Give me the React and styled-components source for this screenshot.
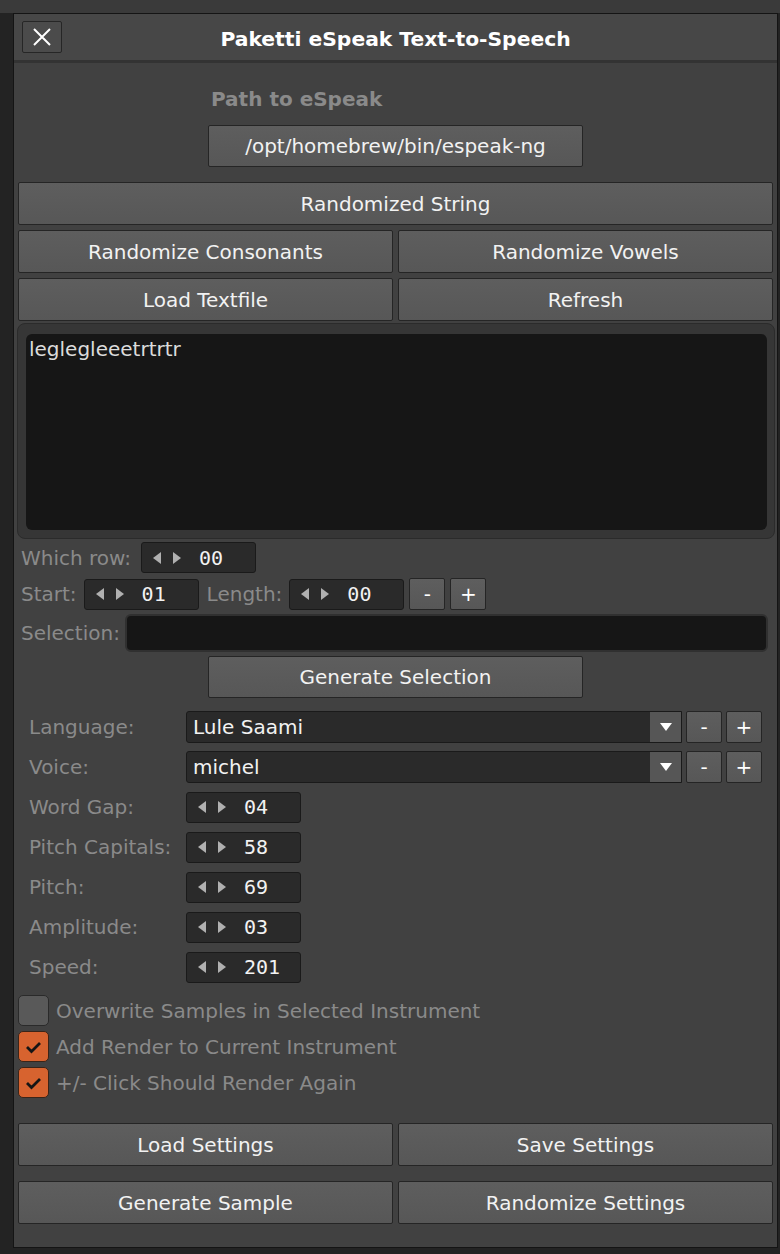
import React from 'react'
import styled, { createGlobalStyle } from 'styled-components'

const GlobalStyle = createGlobalStyle`
  html, body {
    margin: 0;
    padding: 0;
  }
  body {
    background: linear-gradient(#3a3a3a 0, #3a3a3a 13px, #232323 13px);
    font-family: "DejaVu Sans", "Liberation Sans", sans-serif;
    font-size: 20px;
  }
`

const Desk = styled.div`
  padding: 13px 2px 0 13px;
  height: 1254px;
  box-sizing: border-box;
`

const Window = styled.div`
  width: 765px;
  box-sizing: border-box;
  background: #414141;
  border: 1px solid #141414;
`

const TitleBar = styled.div`
  height: 46px;
  display: grid;
  grid-template-columns: 40px 1fr 40px;
  align-items: center;
  padding: 0 8px;
  background: #474747;
  border-bottom: 3px solid #333;
`

const CloseButton = styled.div`
  width: 40px;
  height: 32px;
  box-sizing: border-box;
  display: flex;
  align-items: center;
  justify-content: center;
  background: #4b4b4b;
  border: 1px solid #262626;
  border-radius: 2px;
`

const Title = styled.div`
  text-align: center;
  color: #fff;
  font-weight: bold;
  font-size: 20.3px;
  padding-top: 3px;
`

const Content = styled.div`
  padding: 0 4px 23px;
`

const PathLabel = styled.div`
  margin: 24px 0 14px 193px;
  line-height: 24px;
  font-weight: bold;
  color: #8a8a8a;
`

const Button = styled.div`
  height: ${p => p.h || 43}px;
  box-sizing: border-box;
  display: flex;
  align-items: center;
  justify-content: center;
  background: linear-gradient(#5e5e5e, #575757);
  border: 1px solid #252525;
  border-radius: 2px;
  color: #f2f2f2;
  white-space: nowrap;
  ${p => p.narrow && 'width: 375px; margin-left: 190px;'}
  margin-top: ${p => p.mt || 0}px;
`

const ButtonRow = styled.div`
  display: grid;
  grid-template-columns: 1fr 1fr;
  gap: 5px;
  margin-top: ${p => p.mt || 5}px;
`

const TextFrame = styled.div`
  margin: 2px -2px 0 -1px;
  height: 216px;
  box-sizing: border-box;
  padding: 10px 7px 8px 8px;
  background: #363636;
  border: 1px solid #2b2b2b;
  border-radius: 8px;
`

const TextArea = styled.div`
  height: 100%;
  box-sizing: border-box;
  padding: 3px 3px;
  line-height: 24px;
  background: #161616;
  border-radius: 6px;
  color: #dcdcdc;
`

const FieldRow = styled.div`
  display: flex;
  align-items: center;
  gap: ${p => p.gap || 7}px;
  margin-top: ${p => p.mt || 0}px;
  padding-left: 3px;
`

const Label = styled.span`
  color: #8a8a8a;
  white-space: nowrap;
`

const ValueBox = styled.div`
  width: 115px;
  height: 31px;
  box-sizing: border-box;
  display: flex;
  align-items: center;
  padding-left: 10px;
  background: #2a2a2a;
  border: 1px solid #1a1a1a;
  border-radius: 3px;
`

const Arrows = styled.svg`
  flex: none;
  margin-right: 17px;
`

const Number = styled.span`
  font-family: "DejaVu Sans Mono", "Liberation Mono", monospace;
  color: #f2f2f2;
`

const SmallButton = styled.div`
  width: 36px;
  height: 32px;
  box-sizing: border-box;
  display: flex;
  align-items: center;
  justify-content: center;
  background: linear-gradient(#5e5e5e, #575757);
  border: 1px solid #252525;
  border-radius: 2px;
  color: #fff;
  margin-left: ${p => p.ml || 0}px;
`

const SelectionField = styled.div`
  flex: 1;
  height: 38px;
  margin-right: 5px;
  box-sizing: border-box;
  background: #161616;
  border: 2px solid #303030;
  border-radius: 6px;
`

const Settings = styled.div`
  display: grid;
  grid-template-columns: 157px 1fr;
  grid-auto-rows: 32px;
  row-gap: 8px;
  align-items: center;
  margin-top: 13px;
  padding-left: 11px;
`

const ControlGroup = styled.div`
  display: flex;
  align-items: center;
  gap: 4px;
`

const Select = styled.div`
  width: 496px;
  height: 32px;
  box-sizing: border-box;
  display: flex;
  background: #2a2a2a;
  border: 1px solid #1a1a1a;
  border-radius: 3px 0 0 3px;
  color: #f2f2f2;
`

const SelectText = styled.div`
  flex: 1;
  display: flex;
  align-items: center;
  padding-left: 6px;
`

const SelectArrow = styled.div`
  width: 31px;
  display: flex;
  align-items: center;
  justify-content: center;
  background: #565656;
`

const Checks = styled.div`
  display: flex;
  flex-direction: column;
  gap: 5px;
  margin-top: 12px;
`

const CheckRow = styled.div`
  display: flex;
  align-items: center;
  gap: 7px;
`

const Box = styled.div`
  width: 31px;
  height: 31px;
  box-sizing: border-box;
  border-radius: 5px;
  border: 1px solid ${p => (p.on ? '#3a2418' : '#2a2a2a')};
  background: ${p => (p.on ? '#d7632f' : '#595959')};
`

function Stepper({ value }) {
  return (
    <ValueBox>
      <Arrows width="30" height="14" viewBox="0 0 30 14">
        <polygon points="9,1 9,13 1,7" fill="#b0b0b0" />
        <polygon points="21,1 21,13 29,7" fill="#b0b0b0" />
      </Arrows>
      <Number>{value}</Number>
    </ValueBox>
  )
}

function Check({ on, children }) {
  return (
    <CheckRow>
      <Box on={on}>
        {on && (
          <svg width="29" height="29" viewBox="0 0 29 29">
            <polyline points="8,15 12.5,19.5 21,11" fill="none" stroke="#151515" strokeWidth="2.8" />
          </svg>
        )}
      </Box>
      <Label>{children}</Label>
    </CheckRow>
  )
}

function Dropdown({ value }) {
  return (
    <ControlGroup>
      <Select>
        <SelectText>{value}</SelectText>
        <SelectArrow>
          <svg width="12" height="8" viewBox="0 0 12 8">
            <polygon points="0,0 12,0 6,8" fill="#fff" />
          </svg>
        </SelectArrow>
      </Select>
      <SmallButton>-</SmallButton>
      <SmallButton>+</SmallButton>
    </ControlGroup>
  )
}

const steppers = [
  ['Word Gap:', '04'],
  ['Pitch Capitals:', '58'],
  ['Pitch:', '69'],
  ['Amplitude:', '03'],
  ['Speed:', '201'],
]

export default function App() {
  return (
    <Desk>
      <GlobalStyle />
      <Window>
        <TitleBar>
          <CloseButton>
            <svg width="18" height="18" viewBox="0 0 18 18">
              <path d="M1 1 L17 17 M17 1 L1 17" stroke="#fff" strokeWidth="2" />
            </svg>
          </CloseButton>
          <Title>Paketti eSpeak Text-to-Speech</Title>
          <span />
        </TitleBar>

        <Content>
          <PathLabel>Path to eSpeak</PathLabel>
          <Button narrow h={42}>/opt/homebrew/bin/espeak-ng</Button>

          <Button mt={15}>Randomized String</Button>
          <ButtonRow>
            <Button>Randomize Consonants</Button>
            <Button>Randomize Vowels</Button>
          </ButtonRow>
          <ButtonRow>
            <Button>Load Textfile</Button>
            <Button>Refresh</Button>
          </ButtonRow>

          <TextFrame>
            <TextArea>leglegleeetrtrtr</TextArea>
          </TextFrame>

          <FieldRow mt={3} gap={10}>
            <Label>Which row:</Label>
            <Stepper value="00" />
          </FieldRow>
          <FieldRow mt={5}>
            <Label>Start:</Label>
            <Stepper value="01" />
            <Label style={{ marginLeft: 1 }}>Length:</Label>
            <Stepper value="00" />
            <SmallButton ml={-2}>-</SmallButton>
            <SmallButton ml={-2}>+</SmallButton>
          </FieldRow>
          <FieldRow mt={4} gap={5}>
            <Label>Selection:</Label>
            <SelectionField />
          </FieldRow>
          <Button narrow h={42} mt={4}>Generate Selection</Button>

          <Settings>
            <Label>Language:</Label>
            <Dropdown value="Lule Saami" />
            <Label>Voice:</Label>
            <Dropdown value="michel" />
            {steppers.map(([label, value]) => (
              <React.Fragment key={label}>
                <Label>{label}</Label>
                <Stepper value={value} />
              </React.Fragment>
            ))}
          </Settings>

          <Checks>
            <Check>Overwrite Samples in Selected Instrument</Check>
            <Check on>Add Render to Current Instrument</Check>
            <Check on>+/- Click Should Render Again</Check>
          </Checks>

          <ButtonRow mt={25}>
            <Button>Load Settings</Button>
            <Button>Save Settings</Button>
          </ButtonRow>
          <ButtonRow mt={15}>
            <Button>Generate Sample</Button>
            <Button>Randomize Settings</Button>
          </ButtonRow>
        </Content>
      </Window>
    </Desk>
  )
}
